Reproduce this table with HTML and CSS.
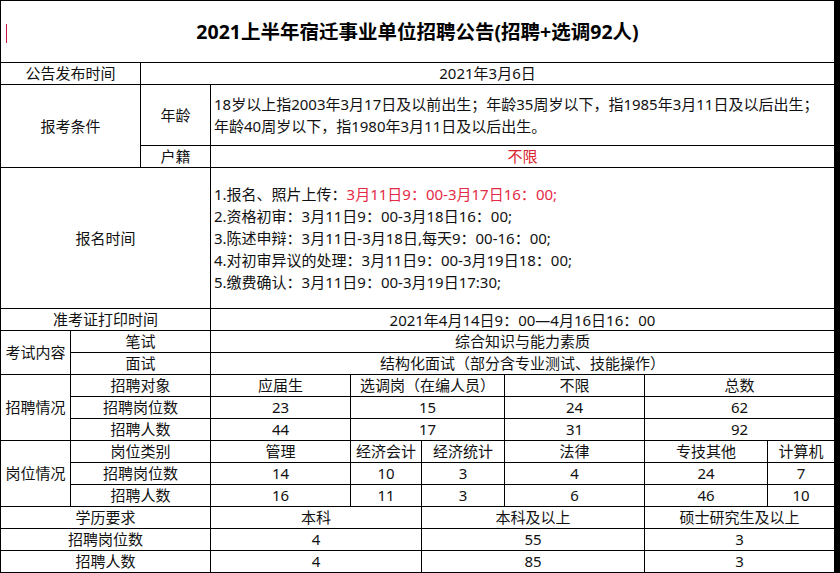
FILE: index.html
```html
<!DOCTYPE html>
<html lang="zh-CN">
<head>
<meta charset="utf-8">
<title>2021上半年宿迁事业单位招聘公告</title>
<link rel="stylesheet" href="styles.css">
</head>
<body>
<div class="sheet">
  <div class="cell title s9"><span class="caret"></span>2021上半年宿迁事业单位招聘公告(招聘+选调92人)</div>

  <div class="cell s2">公告发布时间</div>
  <div class="cell s7">2021年3月6日</div>

  <div class="cell s2 r2">报考条件</div>
  <div class="cell">年龄</div>
  <div class="cell s6 left"><div class="lines">18岁以上指2003年3月17日及以前出生；年龄35周岁以下，指1985年3月11日及以后出生；<br>年龄40周岁以下，指1980年3月11日及以后出生。</div></div>
  <div class="cell">户籍</div>
  <div class="cell s6 red">不限</div>

  <div class="cell s3">报名时间</div>
  <div class="cell s6 left"><div class="lines">1.报名、照片上传：<span class="hl">3月11日9<span class="cc">：</span>00-3月17日16<span class="cc">：</span>00;</span><br>2.资格初审：3月11日9<span class="cc">：</span>00-3月18日16<span class="cc">：</span>00;<br>3.陈述申辩：3月11日-3月18日,每天9<span class="cc">：</span>00-16<span class="cc">：</span>00;<br>4.对初审异议的处理：3月11日9<span class="cc">：</span>00-3月19日18<span class="cc">：</span>00;<br>5.缴费确认：3月11日9<span class="cc">：</span>00-3月19日17:30;</div></div>

  <div class="cell s3">准考证打印时间</div>
  <div class="cell s6"><div>2021年4月14日9：00—4月16日16<span class="cc">：</span>00</div></div>

  <div class="cell r2">考试内容</div>
  <div class="cell s2">笔试</div>
  <div class="cell s6">综合知识与能力素质</div>
  <div class="cell s2">面试</div>
  <div class="cell s6">结构化面试（部分含专业测试、技能操作）</div>

  <div class="cell r3">招聘情况</div>
  <div class="cell s2">招聘对象</div>
  <div class="cell">应届生</div>
  <div class="cell s2">选调岗（在编人员）</div>
  <div class="cell">不限</div>
  <div class="cell s2">总数</div>
  <div class="cell s2">招聘岗位数</div>
  <div class="cell">23</div>
  <div class="cell s2">15</div>
  <div class="cell">24</div>
  <div class="cell s2">62</div>
  <div class="cell s2">招聘人数</div>
  <div class="cell">44</div>
  <div class="cell s2">17</div>
  <div class="cell">31</div>
  <div class="cell s2">92</div>

  <div class="cell r3">岗位情况</div>
  <div class="cell s2">岗位类别</div>
  <div class="cell">管理</div>
  <div class="cell">经济会计</div>
  <div class="cell">经济统计</div>
  <div class="cell">法律</div>
  <div class="cell">专技其他</div>
  <div class="cell">计算机</div>
  <div class="cell s2">招聘岗位数</div>
  <div class="cell">14</div>
  <div class="cell">10</div>
  <div class="cell">3</div>
  <div class="cell">4</div>
  <div class="cell">24</div>
  <div class="cell">7</div>
  <div class="cell s2">招聘人数</div>
  <div class="cell">16</div>
  <div class="cell">11</div>
  <div class="cell">3</div>
  <div class="cell">6</div>
  <div class="cell">46</div>
  <div class="cell">10</div>

  <div class="cell s3">学历要求</div>
  <div class="cell s2">本科</div>
  <div class="cell s2">本科及以上</div>
  <div class="cell s2">硕士研究生及以上</div>
  <div class="cell s3">招聘岗位数</div>
  <div class="cell s2">4</div>
  <div class="cell s2">55</div>
  <div class="cell s2">3</div>
  <div class="cell s3">招聘人数</div>
  <div class="cell s2">4</div>
  <div class="cell s2">85</div>
  <div class="cell s2">3</div>
</div>
</body>
</html>
```

FILE: styles.css
```css
html, body {
  margin: 0;
  padding: 0;
  background: #fff;
}

body {
  width: 840px;
  height: 573px;
  overflow: hidden;
  font-family: "Noto Sans", "Noto Sans CJK SC", "Liberation Sans", sans-serif;
  font-size: 15px;
  color: #111;
}

.sheet {
  display: grid;
  grid-template-columns: 69px 69px 69px 139px 70px 82px 139px 122px 66px;
  grid-template-rows: 61px 21px 60px 21px 140px repeat(12, 21px);
  gap: 1px;
  padding: 1px 6px 1px 1px;
  background: #000;
  width: 840px;
  box-sizing: border-box;
}

.cell {
  background: #fff;
  display: flex;
  align-items: center;
  justify-content: center;
  white-space: nowrap;
  line-height: 21px;
  overflow: hidden;
}

.s2 { grid-column: span 2; }
.s3 { grid-column: span 3; }
.s6 { grid-column: span 6; }
.s7 { grid-column: span 7; }
.s9 { grid-column: span 9; }
.r2 { grid-row: span 2; }
.r3 { grid-row: span 3; }

.left {
  justify-content: flex-start;
  padding-left: 3px;
}

.lines {
  line-height: 22px;
}

.title {
  position: relative;
  font-size: 19.5px;
  font-weight: bold;
  color: #000;
}

.caret {
  position: absolute;
  left: 5px;
  top: 23px;
  width: 1px;
  height: 19px;
  background: #c8143c;
}

.red {
  color: #d9232e;
}

.hl {
  color: #e42a45;
}

.cc {
  font-family: "Noto Sans CJK TC", "Noto Sans CJK SC", sans-serif;
}
```
